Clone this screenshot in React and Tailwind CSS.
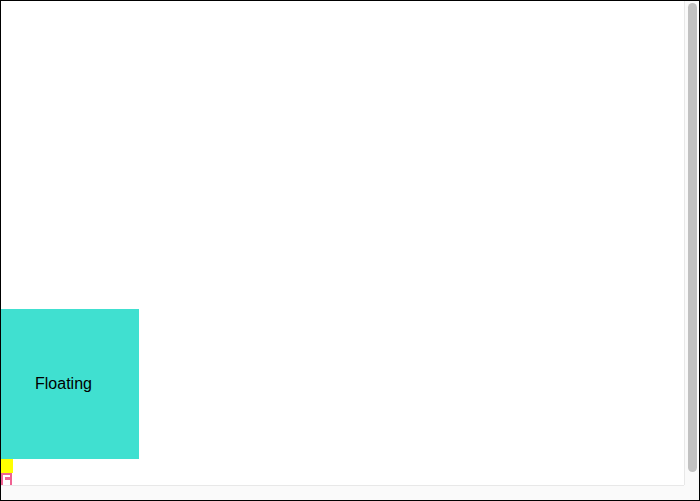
export default function App() {
  return (
    <div className="w-[700px] h-[501px] border border-black bg-white flex flex-col font-['Liberation_Sans',Arial,sans-serif]">
      <div className="flex flex-1 min-h-0">
        {/* scroll viewport */}
        <div className="flex-1 overflow-hidden">
          <div className="h-[308px]" />
          <div className="w-[138px] h-[150px] bg-[#40e0d0] flex items-center pl-[34px] text-[16px] text-black">
            Floating
          </div>
          <div className="w-[12px] h-[14px] bg-[#ffff00]" />
          <div className="w-[11px] h-[20px] border-2 border-[#f06292] bg-white p-[1px]">
            <div className="w-[5px] h-[3px] bg-[#f06292] mt-[1px] ml-[1px]" />
          </div>
        </div>
        {/* vertical scrollbar */}
        <div className="w-[15px] bg-[#fafafa] border-l border-[#e8e8e8] flex justify-center">
          <div className="w-[9px] h-[469px] mt-[2px] rounded-full bg-[#c1c1c1]" />
        </div>
      </div>
      {/* horizontal scrollbar */}
      <div className="h-[15px] flex">
        <div className="flex-1 bg-[#fafafa] border-t border-[#e8e8e8]" />
        <div className="w-[15px] bg-[#fafafa]" />
      </div>
    </div>
  );
}
